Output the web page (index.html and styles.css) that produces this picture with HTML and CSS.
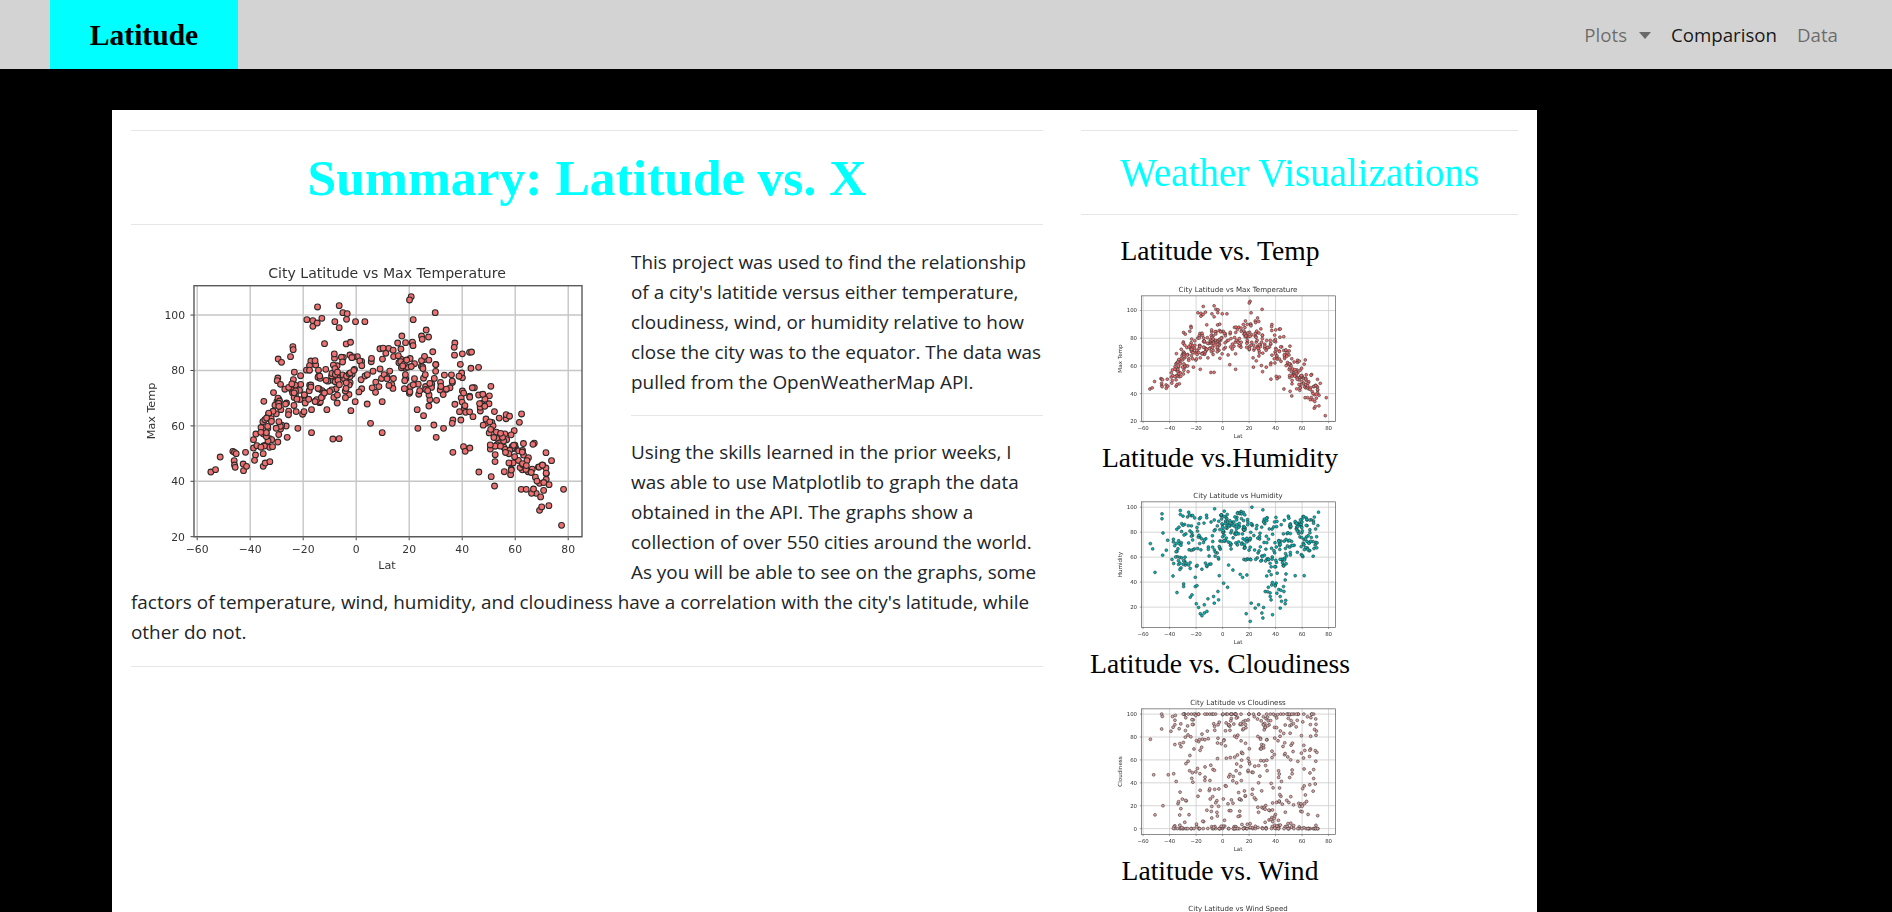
FILE: index.html
```html
<!DOCTYPE html>
<html lang="en">
<head>
<meta charset="utf-8">
<title>Latitude</title>
<link rel="stylesheet" href="styles.css">
</head>
<body>
<nav class="navbar">
  <a class="brand" href="#">Latitude</a>
  <ul class="nav-links">
    <li class="nav-link muted">Plots <span class="caret"></span></li>
    <li class="nav-link active">Comparison</li>
    <li class="nav-link muted">Data</li>
  </ul>
</nav>
<main class="sheet">
  <section class="summary">
    <hr class="rule-top">
    <h1 class="summary-title">Summary: Latitude vs. X</h1>
    <hr class="rule-title">
    <svg class="chart chart-main" data-chart="temp" viewBox="0 0 470 320" role="img" aria-label="City Latitude vs Max Temperature"></svg>
    <p class="copy">This project was used to find the relationship of a city's latitide versus either temperature, cloudiness, wind, or humidity relative to how close the city was to the equator. The data was pulled from the OpenWeatherMap API.</p>
    <hr class="rule-body">
    <p class="copy">Using the skills learned in the prior weeks, I was able to use Matplotlib to graph the data obtained in the API. The graphs show a collection of over 550 cities around the world. As you will be able to see on the graphs, some factors of temperature, wind, humidity, and cloudiness have a correlation with the city's latitude, while other do not.</p>
    <hr class="rule-end">
  </section>
  <aside class="visuals">
    <hr class="rule-top">
    <h2 class="visuals-title">Weather Visualizations</h2>
    <hr class="rule-side">
    <div class="figures">
      <figure class="figure">
        <h3 class="figure-title">Latitude vs. Temp</h3>
        <svg class="chart chart-side" data-chart="temp" viewBox="0 0 470 320" role="img" aria-label="City Latitude vs Max Temperature"></svg>
      </figure>
      <figure class="figure">
        <h3 class="figure-title">Latitude vs.Humidity</h3>
        <svg class="chart chart-side" data-chart="humidity" viewBox="0 0 470 320" role="img" aria-label="City Latitude vs Humidity"></svg>
      </figure>
      <figure class="figure">
        <h3 class="figure-title">Latitude vs. Cloudiness</h3>
        <svg class="chart chart-side" data-chart="cloud" viewBox="0 0 470 320" role="img" aria-label="City Latitude vs Cloudiness"></svg>
      </figure>
      <figure class="figure">
        <h3 class="figure-title">Latitude vs. Wind</h3>
        <svg class="chart chart-side" data-chart="wind" viewBox="0 0 470 320" role="img" aria-label="City Latitude vs Wind Speed"></svg>
      </figure>
    </div>
  </aside>
</main>
<script src="charts.js"></script>
</body>
</html>
```
FILE: styles.css
```css
* { box-sizing: border-box; }
html, body { margin: 0; height: 100%; overflow: hidden; }
body {
  background: #000;
  color: #212529;
  font-family: "Open Sans", "Noto Sans", sans-serif;
  font-size: 18.9px;
  line-height: 30px;
}
.navbar {
  display: flex;
  align-items: stretch;
  justify-content: space-between;
  height: 69px;
  padding: 0 54px 0 50px;
  background: #d3d3d3;
  font-size: 18.7px;
}
.brand {
  display: flex;
  align-items: center;
  justify-content: center;
  width: 188px;
  background: #00ffff;
  color: #000;
  font-family: "Liberation Serif", serif;
  font-size: 29.6px;
  font-weight: 700;
  text-decoration: none;
}
.nav-links {
  display: flex;
  align-items: center;
  gap: 20px;
  margin: 0;
  padding: 0;
  list-style: none;
}
.nav-link.muted { color: rgba(0, 0, 0, 0.5); }
.nav-link.active { color: rgba(0, 0, 0, 0.9); }
.caret {
  display: inline-block;
  margin-left: 7px;
  vertical-align: 3px;
  border-top: 7px solid rgba(0, 0, 0, 0.5);
  border-left: 6px solid transparent;
  border-right: 6px solid transparent;
}
.sheet {
  display: grid;
  grid-template-columns: 912px 437px;
  column-gap: 38px;
  width: 1425px;
  margin: 41px 0 0 112px;
  padding: 20px 19px 0;
  background: #fff;
  min-height: 900px;
}
hr {
  margin: 0;
  border: 0;
  border-top: 1px solid #e6e6e6;
}
.summary-title {
  margin: 0;
  height: 93px;
  color: #00ffff;
  font-family: "Liberation Serif", serif;
  font-size: 51.6px;
  font-weight: 700;
  line-height: 94px;
  text-align: center;
}
.rule-title { margin-bottom: 22px; }
.rule-side { margin-bottom: 20px; }
.chart-main {
  float: left;
  width: 470px;
  height: 320px;
  margin: 11px 30px 0 0;
}
.copy { margin: 0; }
.rule-body { margin: 18px 0 21px; }
.rule-end { margin-top: 19px; }
.visuals-title {
  margin: 0;
  height: 83px;
  color: #00ffff;
  font-family: "Liberation Serif", serif;
  font-size: 39px;
  font-weight: 400;
  line-height: 83px;
  text-align: center;
}
.figure { width: 278px; margin: 0; }
.figure-title {
  margin: 0 0 15.5px;
  color: #000;
  font-family: "Liberation Serif", serif;
  font-size: 27.6px;
  font-weight: 400;
  line-height: 31px;
  text-align: center;
  white-space: nowrap;
}
.chart-side {
  display: block;
  width: 235px;
  height: 160px;
  margin-left: 29px;
}
.chart { font-family: "DejaVu Sans", sans-serif; }
.chart-main { filter: blur(0.6px); }
.chart-side { filter: blur(0.5px); }
.grid-line { stroke: #c6c6c6; stroke-width: 1.4; }
.frame { fill: none; stroke: #5a5a5a; stroke-width: 1.4; }
.tick-mark { stroke: #444; stroke-width: 1; }
.tick-label { fill: #333; font-size: 10.8px; }
.axis-label { fill: #333; font-size: 11.2px; }
.chart-title { fill: #333; font-size: 14.1px; }
.dot { stroke: #2a2a2a; stroke-width: 1.05; }
.dot-temp { fill: #f07070; }
.dot-humidity { fill: #00b8b8; }
.dot-cloud { fill: #e0a4a4; }
.dot-wind { fill: #7aa0d8; }
```
FILE: charts.js
```js
(function () {
  var NS = 'http://www.w3.org/2000/svg';
  var AX = { l: 63, r: 451, t: 27.7, b: 278.7 };
  var XD = [-61.2, 85.2];

  function rng(seed) {
    var s = (seed * 2654435761) >>> 0 || 1;
    function next() {
      s ^= s << 13; s >>>= 0;
      s ^= s >>> 17;
      s ^= s << 5; s >>>= 0;
      return s / 4294967296;
    }
    for (var i = 0; i < 20; i++) next();
    return next;
  }
  function gauss(r) { return (r() + r() + r() + r() - 2) * 1.73; }
  function interp(tbl, x) {
    for (var i = 1; i < tbl.length; i++) {
      if (x <= tbl[i][0]) {
        var a = tbl[i - 1], b = tbl[i];
        return a[1] + (b[1] - a[1]) * (x - a[0]) / (b[0] - a[0]);
      }
    }
    return tbl[tbl.length - 1][1];
  }

  var TEMP_RAW = [274,666,288,659,302,621,340,604,345,607,350,611,344,632,345,645,347,652,378,607,371,642,372,662,381,649,402,569,409,552,402,594,412,587,408,615,405,631,431,611,431,649,437,639,451,635,433,587,440,585,450,592,459,590,475,576,433,454,430,515,436,509,447,493,455,506,432,552,440,550,445,535,450,566,472,455,484,479,483,537,475,384,473,392,483,403,476,327,486,337,501,459,500,528,503,562,520,290,521,299,513,320,562,209,580,212,580,229,593,219,607,205,594,171,659,167,670,188,683,191,681,208,646,215,659,233,708,215,736,215,615,281,574,333,570,347,576,479,576,548,535,535,640,567,659,566,600,458,622,479,653,459,694,482,707,455,743,462,753,520,788,455,788,548,768,427,875,140,870,150,881,209,947,188,847,258,920,240,906,258,908,268,927,261,858,278,878,279,1006,279,1004,292,893,479,912,497,895,535,928,468,931,449,943,525,950,562,972,535,951,451,1000,607,1032,590,1037,604,1051,594,1078,666,1115,680,1125,708,1114,409,1050,307,1056,306,1077,352,1332,718,1288,767,1260,781,1326,826,1296,632,1270,646,1280,688,1250,730,1236,730,1205,718,1220,718,1260,700,1000,510,998,520,1024,510,1020,485];

  function tempData() {
    var pts = [], i;
    for (i = 0; i < TEMP_RAW.length; i += 2) {
      pts.push([(TEMP_RAW[i] - 710) / 7.95, 20 + (860 - TEMP_RAW[i + 1]) / 8.31]);
    }
    var r = rng(41);
    var curve = [[-36, 58], [-30, 64], [-22, 73], [-10, 77], [0, 78], [15, 82], [28, 81], [38, 75], [46, 69], [52, 58], [60, 50], [68, 45], [74, 43]];
    for (i = 0; i < 340; i++) {
      var u = r();
      var lat = u < 0.08 ? -36 + r() * 14 : u < 0.68 ? -24 + r() * 72 : 46 + r() * 27;
      var sd = lat < 46 ? 5.2 : 5;
      pts.push([lat, interp(curve, lat) + gauss(r) * sd]);
    }
    return pts;
  }

  var HUM_RAW = [210,310,217,326,224,397,245,220,245,235,248,278,247,345,262,300,258,330,275,358,278,408,290,458,310,432,310,440,315,375,325,215,330,472,335,465,345,412,345,440,350,437,348,492,355,503,360,522,365,528,372,520,372,495,380,515,383,477,400,470,402,490,413,455,415,480,417,407,430,430,442,442,445,375,458,390,480,403,487,412,500,405,498,522,510,545,513,490,525,505,535,495,545,520,548,535,550,503,577,525,600,505,615,492,645,407,672,407,555,455,570,470,590,460,600,470,610,440,615,420,300,210,300,222,515,200,548,208,403,205,432,212,715,215];

  function humidityData() {
    var pts = [], i;
    for (i = 0; i < HUM_RAW.length; i += 2) {
      pts.push([(HUM_RAW[i] - 427) / 3.98, 20 + (502 - HUM_RAW[i + 1]) / 3.775]);
    }
    var r = rng(77);
    for (i = 0; i < 410; i++) {
      var u = r(), lat, h;
      if (u < 0.26) { lat = 48 + r() * 24; h = 60 + r() * 33; }
      else if (u < 0.42) { lat = -3 + r() * 20; h = 66 + r() * 31; }
      else if (u < 0.62) { lat = -38 + r() * 28; h = 50 + r() * 45; }
      else if (u < 0.82) { lat = 16 + r() * 32; h = 56 + r() * 36; }
      else if (u < 0.93) { lat = 33 + r() * 15; h = 22 + r() * 38; }
      else { lat = -12 + r() * 14; h = 50 + r() * 45; }
      pts.push([lat, h]);
    }
    return pts;
  }

  function cloudData() {
    var pts = [[-54.5, 78], [-52, 47], [-51, 12], [-46, 100], [-45.5, 98], [-46, 87], [-45, 20], [-41, 47], [-39, 85]];
    var r = rng(103);
    for (var i = 0; i < 480; i++) {
      var u = r(), lat = -38 + r() * 110, c;
      if (u < 0.2) { c = r() < 0.7 ? 0 : r() * 3; }
      else if (u < 0.38) { c = r() < 0.5 ? 100 : 90 + r() * 10; }
      else { c = 3 + r() * 88; }
      pts.push([lat, c]);
    }
    return pts;
  }

  function windData() {
    var pts = [], r = rng(9);
    for (var i = 0; i < 500; i++) {
      pts.push([-52 + r() * 128, 1 + -Math.log(1 - r() * 0.98) * 6]);
    }
    return pts;
  }

  var CHARTS = {
    temp: { title: 'City Latitude vs Max Temperature', y: 'Max Temp', dom: [20, 110.6], ticks: [20, 40, 60, 80, 100], data: tempData, dot: 'dot-temp' },
    humidity: { title: 'City Latitude vs Humidity', y: 'Humidity', dom: [3.8, 104.3], ticks: [20, 40, 60, 80, 100], data: humidityData, dot: 'dot-humidity' },
    cloud: { title: 'City Latitude vs Cloudiness', y: 'Cloudiness', dom: [-5, 104.6], ticks: [0, 20, 40, 60, 80, 100], data: cloudData, dot: 'dot-cloud' },
    wind: { title: 'City Latitude vs Wind Speed', y: 'Wind Speed', dom: [-1, 36], ticks: [0, 5, 10, 15, 20, 25, 30, 35], data: windData, dot: 'dot-wind' }
  };

  function el(parent, name, attrs, text) {
    var n = document.createElementNS(NS, name);
    for (var k in attrs) n.setAttribute(k, attrs[k]);
    if (text !== undefined) n.textContent = text;
    parent.appendChild(n);
    return n;
  }

  function draw(svg) {
    var c = CHARTS[svg.getAttribute('data-chart')];
    var sx = function (v) { return AX.l + (v - XD[0]) / (XD[1] - XD[0]) * (AX.r - AX.l); };
    var sy = function (v) { return AX.b - (v - c.dom[0]) / (c.dom[1] - c.dom[0]) * (AX.b - AX.t); };
    var xt = [-60, -40, -20, 0, 20, 40, 60, 80];
    xt.forEach(function (v) {
      el(svg, 'line', { 'class': 'grid-line', x1: sx(v), x2: sx(v), y1: AX.t, y2: AX.b });
      el(svg, 'line', { 'class': 'tick-mark', x1: sx(v), x2: sx(v), y1: AX.b, y2: AX.b + 3.5 });
      el(svg, 'text', { 'class': 'tick-label', x: sx(v), y: 295, 'text-anchor': 'middle' }, v < 0 ? '\u2212' + (-v) : String(v));
    });
    c.ticks.forEach(function (v) {
      el(svg, 'line', { 'class': 'grid-line', x1: AX.l, x2: AX.r, y1: sy(v), y2: sy(v) });
      el(svg, 'line', { 'class': 'tick-mark', x1: AX.l - 3.5, x2: AX.l, y1: sy(v), y2: sy(v) });
      el(svg, 'text', { 'class': 'tick-label', x: 54, y: sy(v) + 3.9, 'text-anchor': 'end' }, String(v));
    });
    c.data().forEach(function (p) {
      el(svg, 'circle', { 'class': 'dot ' + c.dot, cx: sx(p[0]), cy: sy(p[1]), r: 2.9 });
    });
    el(svg, 'rect', { 'class': 'frame', x: AX.l, y: AX.t, width: AX.r - AX.l, height: AX.b - AX.t });
    el(svg, 'text', { 'class': 'chart-title', x: 256, y: 20, 'text-anchor': 'middle' }, c.title);
    el(svg, 'text', { 'class': 'axis-label', x: 256, y: 311, 'text-anchor': 'middle' }, 'Lat');
    el(svg, 'text', { 'class': 'axis-label', x: 24, y: 153, 'text-anchor': 'middle', transform: 'rotate(-90 24 153)' }, c.y);
  }

  Array.prototype.forEach.call(document.querySelectorAll('svg[data-chart]'), draw);
})();
```
